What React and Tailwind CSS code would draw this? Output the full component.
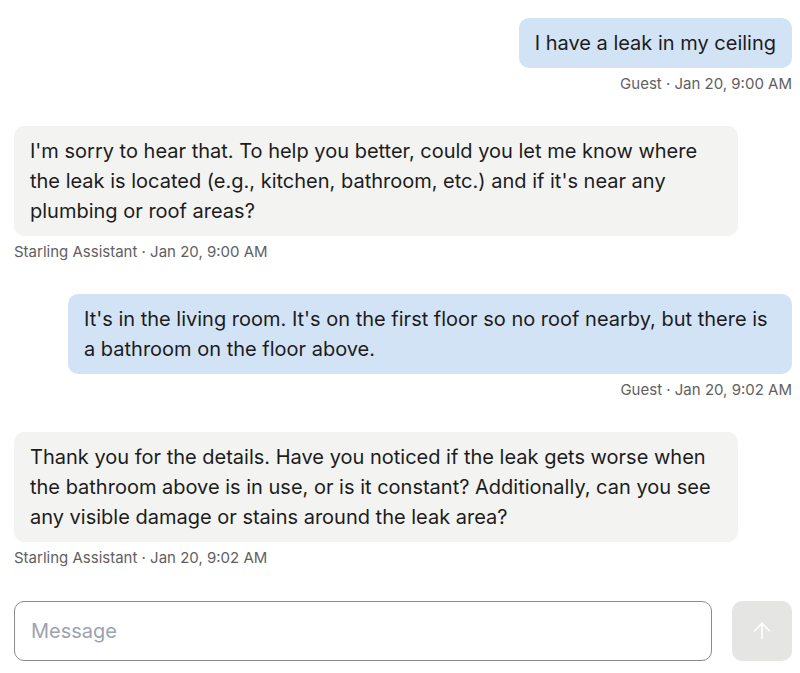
import React from 'react';
import { ArrowUp } from 'lucide-react';

const messages = [
  { from: 'guest', text: 'I have a leak in my ceiling', meta: 'Guest · Jan 20, 9:00 AM' },
  {
    from: 'assistant',
    text: "I'm sorry to hear that. To help you better, could you let me know where the leak is located (e.g., kitchen, bathroom, etc.) and if it's near any plumbing or roof areas?",
    meta: 'Starling Assistant · Jan 20, 9:00 AM',
  },
  {
    from: 'guest',
    text: "It's in the living room. It's on the first floor so no roof nearby, but there is a bathroom on the floor above.",
    meta: 'Guest · Jan 20, 9:02 AM',
  },
  {
    from: 'assistant',
    text: 'Thank you for the details. Have you noticed if the leak gets worse when the bathroom above is in use, or is it constant? Additionally, can you see any visible damage or stains around the leak area?',
    meta: 'Starling Assistant · Jan 20, 9:02 AM',
  },
];

function Message({ from, text, meta }) {
  const guest = from === 'guest';
  return (
    <div className={guest ? 'flex flex-col items-end' : 'flex flex-col items-start'}>
      <div
        className={
          guest
            ? 'max-w-[724px] rounded-[10px] bg-[#d3e3f6] px-4 py-[10px] text-[20px] leading-[30px] text-[#1c1c1c]'
            : 'max-w-[724px] rounded-[10px] bg-[#f3f3f2] px-4 py-[10px] text-[20px] leading-[30px] text-[#1c1c1c]'
        }
      >
        {text}
      </div>
      <div className="mt-[6px] text-[15px] leading-5 text-[#5f6062]">{meta}</div>
    </div>
  );
}

export default function App() {
  return (
    <div className="min-h-[673px] bg-white pl-[14px] pr-[8px] pt-[18px] font-['Inter',sans-serif]">
      <div className="flex flex-col gap-8">
        {messages.map((m, i) => (
          <Message key={i} {...m} />
        ))}
      </div>
      <div className="mt-[33px] flex gap-5">
        <input
          placeholder="Message"
          className="h-[60px] flex-1 rounded-[10px] border border-[#8c8c8c] bg-white px-4 text-[20px] text-[#1c1c1c] placeholder:text-[#9ca3af] outline-none"
        />
        <button className="flex h-[60px] w-[60px] items-center justify-center rounded-[10px] bg-[#e5e5e3] text-white">
          <ArrowUp size={26} strokeWidth={1.5} />
        </button>
      </div>
    </div>
  );
}
